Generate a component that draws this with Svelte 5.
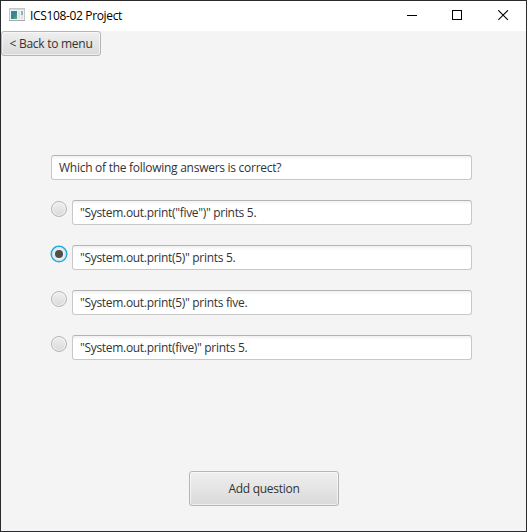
<script>
  let selected = $state(1);
  const question = 'Which of the following answers is correct?';
  const answers = [
    '"System.out.print("five")" prints 5.',
    '"System.out.print(5)" prints 5.',
    '"System.out.print(5)" prints five.',
    '"System.out.print(five)" prints 5.'
  ];
</script>

<div class="window">
  <header>
    <svg class="app-icon" width="16" height="15" viewBox="0 0 16 15">
      <defs>
        <linearGradient id="pane" x1="0" y1="0" x2="1" y2="1">
          <stop offset="0" stop-color="#527fa8" />
          <stop offset="0.5" stop-color="#34878c" />
          <stop offset="1" stop-color="#5fa878" />
        </linearGradient>
      </defs>
      <rect x="0.5" y="0.5" width="15" height="12" fill="#f1f2f4" stroke="#c3c6ca" />
      <path d="M1 1.5h14" stroke="#d5d8dc" />
      <path d="M0 12.5h16" stroke="#a5aaaf" />
      <rect x="2" y="3" width="6" height="8" fill="url(#pane)" />
      <rect x="9" y="3" width="2" height="8" fill="#e1e2e6" />
      <rect x="12" y="3" width="2" height="4" fill="#8db9a8" />
      <rect x="12" y="7" width="2" height="4" fill="#dde3e4" />
    </svg>
    <span class="title">ICS108-02 Project</span>
    <div class="controls">
      <svg width="11" height="11" viewBox="0 0 11 11"><path d="M1 5.5h10" stroke="#000" /></svg>
      <svg width="11" height="11" viewBox="0 0 11 11"><rect x="0.5" y="0.5" width="9" height="9" fill="none" stroke="#000" /></svg>
      <svg width="11" height="11" viewBox="0 0 11 11"><path d="M0.3 0.3l9.6 9.6M9.9 0.3l-9.6 9.6" stroke="#000" stroke-width="1.1" /></svg>
    </div>
  </header>
  <main>
    <button class="back"><span>&lt; Back to menu</span></button>
    <div class="form">
      <div class="field q"><span>{question}</span></div>
      {#each answers as answer, i}
        <div class="row">
          <button class="radio" class:on={selected === i} aria-label={answer} onclick={() => (selected = i)}>
            {#if selected === i}
              <svg width="18" height="18" viewBox="0 0 18 18">
                <circle cx="9" cy="9" r="7.7" fill="#ececec" stroke="#27a9d6" stroke-width="1.6" />
                <circle cx="9" cy="9" r="6.5" fill="none" stroke="#c4e6f2" />
                <circle cx="9" cy="9" r="4" fill="#4d4d4d" />
              </svg>
            {/if}
          </button>
          <div class="field answer"><span>{answer}</span></div>
        </div>
      {/each}
    </div>
    <button class="add"><span>Add question</span></button>
  </main>
</div>

<style>
  .window {
    box-sizing: border-box;
    width: 527px;
    height: 532px;
    border: 1px solid #2b2b2d;
    background: #f4f4f4;
    display: flex;
    flex-direction: column;
    font: 12px/16px "Open Sans", "Noto Sans", sans-serif;
    letter-spacing: -0.27px;
    color: #333;
    white-space: pre;
  }
  header {
    height: 30px;
    box-sizing: border-box;
    background: #fff;
    display: flex;
    align-items: center;
    padding: 0 17px 1px 8px;
    color: #000;
  }
  svg { display: block; flex: none; }
  .app-icon { margin-right: 5px; }
  .title { letter-spacing: -0.35px; line-height: 17px; }
  .controls { margin-left: auto; display: flex; gap: 35px; }
  main { flex: 1; display: flex; flex-direction: column; }
  button {
    box-sizing: border-box;
    font: inherit;
    letter-spacing: inherit;
    color: inherit;
    padding: 0;
    margin: 0;
    border: 1px solid #b5b5b5;
    border-radius: 3px;
    background: linear-gradient(#efefef, #dadada);
    box-shadow: inset 0 0 0 1px rgba(255, 255, 255, 0.55);
    display: flex;
    align-items: center;
    justify-content: center;
  }
  .back { width: 100px; height: 25px; }
  .form {
    display: flex;
    flex-direction: column;
    gap: 20px;
    width: 421px;
    margin: 99px 0 0 50px;
  }
  .row { display: flex; gap: 5px; }
  .field {
    box-sizing: border-box;
    flex: 1 1 auto;
    height: 25px;
    display: flex;
    align-items: center;
    padding: 0 7px;
    border: 1px solid #c8c8c8;
    border-top-color: #b4b4b4;
    border-radius: 3px;
    background: linear-gradient(#f1f1f1, #fff 4px);
  }
  .answer { letter-spacing: -0.31px; }
  .radio {
    width: 16px;
    height: 16px;
    margin-top: 1px;
    flex: none;
    border-radius: 50%;
  }
  .radio.on { border-color: transparent; background: none; box-shadow: none; }
  .add { width: 150px; height: 35px; margin: 111px 0 0 188px; }
</style>
